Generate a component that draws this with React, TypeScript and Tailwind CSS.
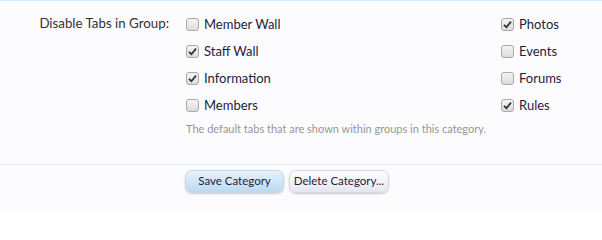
import React from "react";

const font = { fontFamily: 'Lato, "Open Sans", "DejaVu Sans", sans-serif' };

function Box({ checked }: { checked: boolean }) {
  return (
    <span className="w-[13px] h-[13px] rounded-[3px] border border-[#a9a9a9] bg-gradient-to-b from-[#f4f4f4] to-[#dcdcdc] flex items-center justify-center shrink-0">
      {checked && (
        <svg width="9" height="9" viewBox="0 0 9 9">
          <path d="M1 4.8 L3.4 7.2 L8 1.6" stroke="#333" strokeWidth="1.8" fill="none" />
        </svg>
      )}
    </span>
  );
}

function Item({ label, checked }: { label: string; checked: boolean }) {
  return (
    <label className="flex items-center h-[27px] gap-[5px] text-[13px] text-[#1d1d3c]">
      <Box checked={checked} />
      <span>{label}</span>
    </label>
  );
}

export default function App() {
  return (
    <div className="w-[602px] h-[210px] bg-[#fcfcff] border-t border-[#d7edfc] text-[13px] overflow-hidden" style={font}>
      <div className="flex pt-[10px]">
        <div className="w-[169px] text-right text-[13.3px] text-[#333] pt-[4px] leading-[16px]">Disable Tabs in Group:</div>
        <div className="pl-[17px]">
          <div className="grid grid-cols-[315px_auto]">
            <div className="flex flex-col">
              <Item label="Member Wall" checked={false} />
              <Item label="Staff Wall" checked={true} />
              <Item label="Information" checked={true} />
              <Item label="Members" checked={false} />
            </div>
            <div className="flex flex-col">
              <Item label="Photos" checked={true} />
              <Item label="Events" checked={false} />
              <Item label="Forums" checked={false} />
              <Item label="Rules" checked={true} />
            </div>
          </div>
          <div className="text-[11px] text-[#969696] mt-[2px]">The default tabs that are shown within groups in this category.</div>
        </div>
      </div>
      <div className="mt-[26px] border-t border-[#d7edfc] pt-[5px] pl-[185px] flex gap-[5px]">
        <button className="h-[23px] w-[99px] rounded-[7px] border border-[#c8d8e8] bg-gradient-to-b from-[#e8f2fb] to-[#bcd9f0] text-[11.5px] text-[#1d1d3c] shadow-[0_1px_2px_rgba(0,0,0,0.2)]">Save Category</button>
        <button className="h-[23px] w-[100px] rounded-[7px] border border-[#d8d8e4] bg-gradient-to-b from-[#ffffff] to-[#e6e6f0] text-[11.5px] text-[#1d1d3c] shadow-[0_1px_2px_rgba(0,0,0,0.2)]">Delete Category...</button>
      </div>
    </div>
  );
}
